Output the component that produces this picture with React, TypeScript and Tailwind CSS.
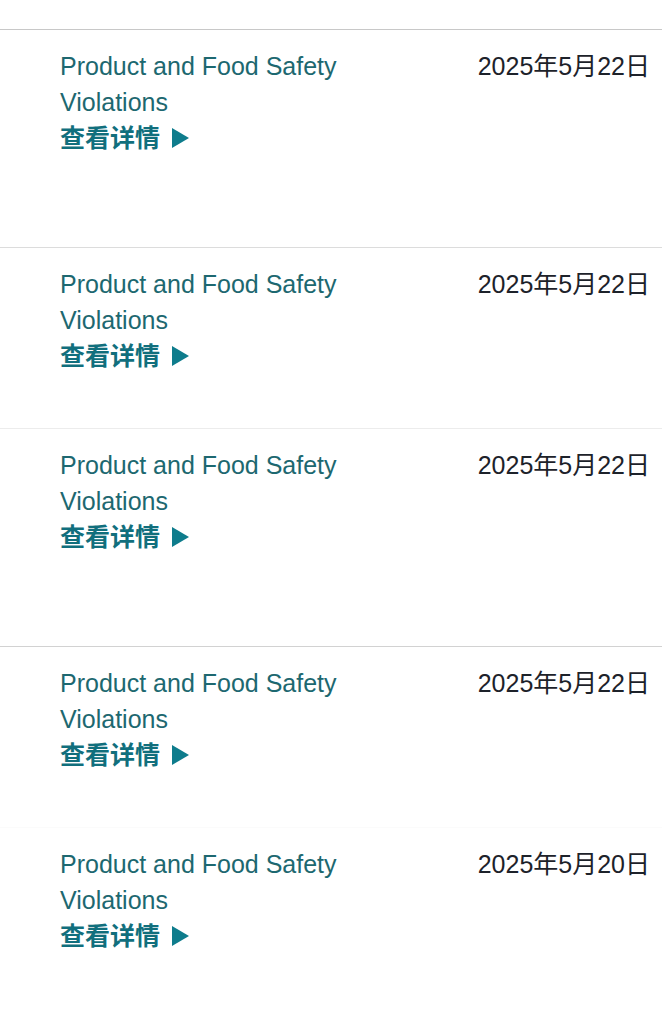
import React from "react";

type Item = {
  title: string;
  date: string;
  height: string;
  border: string;
};

const items: Item[] = [
  { title: "Product and Food Safety Violations", date: "2025年5月22日", height: "h-[218px]", border: "border-[#dcdcdc]" },
  { title: "Product and Food Safety Violations", date: "2025年5月22日", height: "h-[181px]", border: "border-[#ececec]" },
  { title: "Product and Food Safety Violations", date: "2025年5月22日", height: "h-[218px]", border: "border-[#d2d2d2]" },
  { title: "Product and Food Safety Violations", date: "2025年5月22日", height: "h-[181px]", border: "border-[#fbfbfb]" },
  { title: "Product and Food Safety Violations", date: "2025年5月20日", height: "h-[200px]", border: "border-transparent" },
];

function Row({ item }: { item: Item }) {
  return (
    <div className={`flex items-start pl-[60px] pr-[12px] pt-[18px] border-b ${item.height} ${item.border}`}>
      <div className="flex-1 min-w-0">
        <p className="w-[290px] text-[25px] leading-[36px] text-[#1d6870]">{item.title}</p>
        <a className="flex items-center gap-[12px] text-[25px] leading-[36px] font-bold text-[#116f7d]">
          查看详情
          <svg width="17" height="20" viewBox="0 0 17 20" className="mb-[1px]">
            <path d="M0 0 L17 10 L0 20 Z" fill="#0e7c8c" />
          </svg>
        </a>
      </div>
      <span className="text-[25px] leading-[36px] text-[#1d222a] whitespace-nowrap">{item.date}</span>
    </div>
  );
}

export default function App() {
  return (
    <div
      className="w-[662px] h-[1024px] overflow-hidden bg-white"
      style={{ fontFamily: '"Liberation Sans", Arial, "Noto Sans CJK SC", sans-serif' }}
    >
      <div className="h-[30px] border-b border-[#c8c8c8]" />
      {items.map((item, i) => (
        <Row key={i} item={item} />
      ))}
    </div>
  );
}
